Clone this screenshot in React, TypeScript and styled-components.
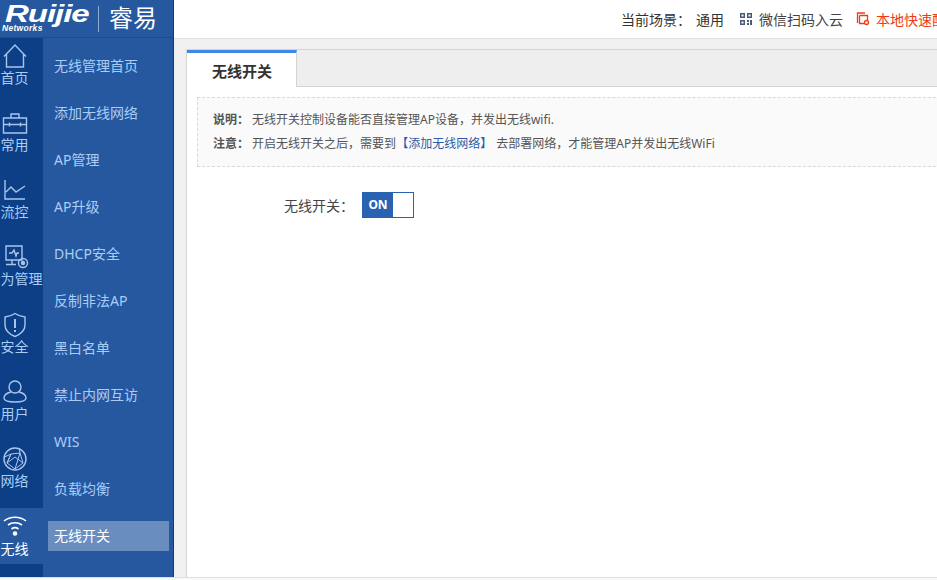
import React from "react";
import styled, { createGlobalStyle } from "styled-components";

const Global = createGlobalStyle`
  html, body { margin: 0; padding: 0; background: #f9f9f9; }
  body { font-family: "Noto Sans", "Noto Sans CJK SC", sans-serif; }
  #root { width: 937px; height: 580px; overflow: hidden; }
`;

const Page = styled.div`
  width: 937px;
  height: 580px;
  overflow: hidden;
  display: flex;
  flex-direction: column;
  background: #f9f9f9;
`;
const Frame = styled.div`
  height: 577px;
  display: flex;
  border-bottom: 1px solid #dfdfdf;
  box-sizing: content-box;
  flex: none;
`;
const Sidebar = styled.aside`
  width: 174px;
  flex: none;
  display: flex;
  flex-direction: column;
  background: #26589f;
  border-right: 1px solid #0f3a75;
  box-sizing: border-box;
`;
const Logo = styled.div`
  height: 38px;
  flex: none;
  display: flex;
  align-items: center;
  padding-left: 2px;
  position: relative;
  box-sizing: border-box;
  color: #fff;
  border-bottom: 1px solid #1c4a8c;
`;
const Brand = styled.div`
  width: 88px;
  height: 30px;
  position: relative;
  flex: none;
`;
const BrandName = styled.span`
  position: absolute;
  left: 3px;
  top: -5px;
  font: italic 700 24px/30px "Liberation Sans", sans-serif;
  letter-spacing: -0.8px;
  transform: scaleX(1.38);
  transform-origin: left;
`;
const BrandSub = styled.span`
  position: absolute;
  left: 0;
  top: 19px;
  font: italic 700 8.5px/10px "Liberation Sans", sans-serif;
  letter-spacing: 0.3px;
`;
const LogoRule = styled.div`
  width: 1px;
  height: 26px;
  background: #8fa9d0;
  margin: 0 10px 0 8px;
`;
const LogoCn = styled.span`
  font-size: 24px;
  line-height: 30px;
  font-weight: 400;
  margin-top: -2px;
`;
const SideBody = styled.div`
  flex: 1;
  display: flex;
  min-height: 0;
`;
const Rail = styled.nav`
  width: 43px;
  flex: none;
  background: #0c3f85;
  display: flex;
  flex-direction: column;
`;
const RailItem = styled.div<{ $active?: boolean }>`
  height: 56px;
  flex: none;
  margin-bottom: 11.14px;
  padding-right: 14px;
  box-sizing: border-box;
  background: ${(p) => (p.$active ? "#26589f" : "transparent")};
  color: ${(p) => (p.$active ? "#fff" : "#a9cdf8")};
  display: flex;
  flex-direction: column;
  align-items: center;
  position: relative;
  font-size: 14px;
  line-height: 20px;
`;
const RailIcon = styled.svg`
  width: 26px;
  height: 26px;
  flex: none;
  margin-top: 5px;
  fill: none;
  stroke: #a9c5ee;
  stroke-width: 1.4;
`;
const RailLabel = styled.span`
  white-space: nowrap;
  margin-top: -1px;
`;
const SubNav = styled.nav`
  flex: 1;
  padding: 13px 4px 0 5px;
  display: flex;
  flex-direction: column;
  gap: 17px;
`;
const SubItem = styled.div<{ $active?: boolean }>`
  height: 30px;
  flex: none;
  padding-left: 6px;
  font-size: 14px;
  line-height: 30px;
  white-space: nowrap;
  color: ${(p) => (p.$active ? "#fff" : "#a9cdf8")};
  background: ${(p) => (p.$active ? "#6a8dbf" : "transparent")};
`;
const Main = styled.main`
  flex: 1;
  min-width: 0;
  display: flex;
  flex-direction: column;
`;
const TopBar = styled.header`
  height: 39px;
  flex: none;
  background: #fff;
  border-bottom: 1px solid #dfdfe6;
  box-sizing: border-box;
  display: flex;
  align-items: center;
  padding-left: 447px;
  font-size: 14px;
  color: #333;
  white-space: nowrap;
`;
const Scene = styled.span`
  margin-right: 15px;
`;
const SceneValue = styled.span`
  margin-left: 5px;
`;
const TopLink = styled.span<{ $warn?: boolean }>`
  display: inline-flex;
  align-items: center;
  gap: 6px;
  margin-right: 13px;
  color: ${(p) => (p.$warn ? "#f03a17" : "#444")};
`;
const Stage = styled.div`
  flex: 1;
  min-height: 0;
  background: #f0f0f0;
  padding: 10px 0 0 12px;
`;
const Panel = styled.section`
  width: 800px;
  height: 100%;
  box-sizing: border-box;
  background: #fff;
  border-left: 1px solid #d6d6d6;
  border-top: 1px solid #d6d6d6;
`;
const TabStrip = styled.div`
  height: 37px;
  background: #eeeeee;
  border-bottom: 1px solid #d4d4d4;
  box-sizing: border-box;
  display: flex;
`;
const Tab = styled.div`
  width: 110px;
  height: 37px;
  box-sizing: border-box;
  background: #fff;
  border-top: 3px solid #3f87e6;
  border-right: 1px solid #d4d4d4;
  padding-left: 25px;
  font-size: 15px;
  font-weight: 600;
  line-height: 37px;
  color: #333;
`;
const Notice = styled.div`
  margin: 10px 0 0 10px;
  height: 70px;
  box-sizing: border-box;
  border: 1px dashed #d9d9d9;
  background: #fafafa;
  padding: 10px 0 0 15px;
  font-size: 12px;
  line-height: 24px;
  color: #555;
  white-space: nowrap;
`;
const NoticeRow = styled.div`
  display: flex;
`;
const NoticeTag = styled.b`
  width: 39px;
  flex: none;
  font-weight: 700;
  color: #555;
`;
const NoticeLink = styled.span`
  color: #2c5da6;
  margin: 0 1px 0 -3px;
`;
const Field = styled.div`
  display: flex;
  align-items: center;
  margin-top: 25px;
  padding-left: 97px;
  font-size: 14px;
  color: #444;
`;
const FieldLabel = styled.label`
  width: 78px;
  flex: none;
  white-space: nowrap;
`;
const Switch = styled.div`
  width: 52px;
  height: 26px;
  box-sizing: border-box;
  border: 1px solid #2a62b2;
  display: flex;
  background: #fff;
`;
const SwitchOn = styled.span`
  width: 30px;
  background: #2a62b2;
  color: #fff;
  font: 700 12px/24px "Noto Sans", sans-serif;
  text-align: center;
`;
const Small = styled.svg`
  width: 14px;
  height: 14px;
  flex: none;
`;

const HomeI = () => (
  <RailIcon viewBox="0 0 26 26">
    <path d="M2 13.500 13 2l11 11.500M4.500 11v13h17V11" />
  </RailIcon>
);
const CaseI = () => (
  <RailIcon viewBox="0 0 26 26">
    <path d="M1.500 8h23v15h-23zM9 8V4h8v4M1.500 14.500h23M7.500 12.500v4M18.500 12.500v4" />
  </RailIcon>
);
const ChartI = () => (
  <RailIcon viewBox="0 0 26 26">
    <path d="M3 3v19h20M4 15l5-5 5 5 9-6" />
  </RailIcon>
);
const BehaviorI = () => (
  <RailIcon viewBox="0 0 30 26" style={{ width: 30 }}>
    <path d="M6 2h16v14H6zM9 9h3l2-3 2 6 1-3h2M12 16v4M6 20.500h10" />
    <circle cx="23" cy="19" r="4.500" />
    <circle cx="23" cy="19" r="1.500" fill="#a9c5ee" />
  </RailIcon>
);
const ShieldI = () => (
  <RailIcon viewBox="0 0 26 26">
    <path d="M13 1.500c3 2 6 3 10 3.500v8c0 5-4 9-10 11.500C7 22 3 18 3 13V5c4-.5 7-1.500 10-3.500z" />
    <path d="M13 7v9M13 18v2" strokeWidth="2" />
  </RailIcon>
);
const UserI = () => (
  <RailIcon viewBox="0 0 26 26">
    <circle cx="13" cy="8" r="6" />
    <path d="M9 13c-4 1-7 3-7 6 0 3 4 4 11 4s11-1 11-4c0-3-3-5-7-6" />
  </RailIcon>
);
const NetI = () => (
  <RailIcon viewBox="0 0 26 26">
    <circle cx="13" cy="13" r="11" />
    <path d="M9 8l9-1 3 10-8 6-8-6zM9 8 5 17M18 7l-5 16M9 8 2.500 11M18 7l-1-5M21 17 13 11 5 17" strokeWidth="1" />
  </RailIcon>
);
const WifiI = () => (
  <RailIcon viewBox="0 0 26 26" style={{ marginTop: 6, stroke: "#fff" }}>
    <path d="M2 7c6-5 16-5 22 0M6 11c4-3 10-3 14 0M9.500 15c2-1.500 5-1.500 7 0" strokeWidth="1.600" />
    <circle cx="13" cy="19.500" r="1.600" fill="#fff" />
  </RailIcon>
);

const rail: [string, React.ReactNode, boolean?][] = [
  ["首页", <HomeI />],
  ["常用", <CaseI />],
  ["流控", <ChartI />],
  ["行为管理", <BehaviorI />],
  ["安全", <ShieldI />],
  ["用户", <UserI />],
  ["网络", <NetI />],
  ["无线", <WifiI />, true],
];
const subs = ["无线管理首页", "添加无线网络", "AP管理", "AP升级", "DHCP安全", "反制非法AP", "黑白名单", "禁止内网互访", "WIS", "负载均衡", "无线开关"];

export default function App() {
  return (
    <Page>
      <Global />
      <Frame>
        <Sidebar>
          <Logo>
            <Brand>
              <BrandName>Ruijie</BrandName>
              <BrandSub>Networks</BrandSub>
            </Brand>
            <LogoRule />
            <LogoCn>睿易</LogoCn>
          </Logo>
          <SideBody>
            <Rail>
              {rail.map(([label, icon, active]) => (
                <RailItem key={label} $active={active}>
                  {icon}
                  <RailLabel>{label}</RailLabel>
                </RailItem>
              ))}
            </Rail>
            <SubNav>
              {subs.map((s) => (
                <SubItem key={s} $active={s === "无线开关"}>{s}</SubItem>
              ))}
            </SubNav>
          </SideBody>
        </Sidebar>
        <Main>
          <TopBar>
            <Scene>当前场景：<SceneValue>通用</SceneValue></Scene>
            <TopLink>
              <Small viewBox="0 0 14 14">
                <path fill="#4a5a78" d="M1 1h5v5H1zM8 1h5v5H8zM1 8h5v5H1zM8 8h2v2H8zM11 8h2v5h-2zM8 11h2v2H8z" />
                <path fill="#fff" d="M2.500 2.500h2v2h-2zM9.500 2.500h2v2h-2zM2.500 9.500h2v2h-2z" />
              </Small>
              微信扫码入云
            </TopLink>
            <TopLink $warn>
              <Small viewBox="0 0 14 14" fill="none" stroke="#f03a17" strokeWidth="1.300">
                <path d="M9 1H1.500v10" />
                <path d="M3.500 3.500h8v5M3.500 3.500v8H8" />
                <circle cx="10.500" cy="10.500" r="2" />
              </Small>
              本地快速配置
            </TopLink>
          </TopBar>
          <Stage>
            <Panel>
              <TabStrip>
                <Tab>无线开关</Tab>
              </TabStrip>
              <Notice>
                <NoticeRow>
                  <NoticeTag>说明：</NoticeTag>
                  无线开关控制设备能否直接管理AP设备，并发出无线wifi.
                </NoticeRow>
                <NoticeRow>
                  <NoticeTag>注意：</NoticeTag>
                  <span>开启无线开关之后，需要到 <NoticeLink>【添加无线网络】</NoticeLink> 去部署网络，才能管理AP并发出无线WiFi</span>
                </NoticeRow>
              </Notice>
              <Field>
                <FieldLabel>无线开关：</FieldLabel>
                <Switch><SwitchOn>ON</SwitchOn></Switch>
              </Field>
            </Panel>
          </Stage>
        </Main>
      </Frame>
    </Page>
  );
}
